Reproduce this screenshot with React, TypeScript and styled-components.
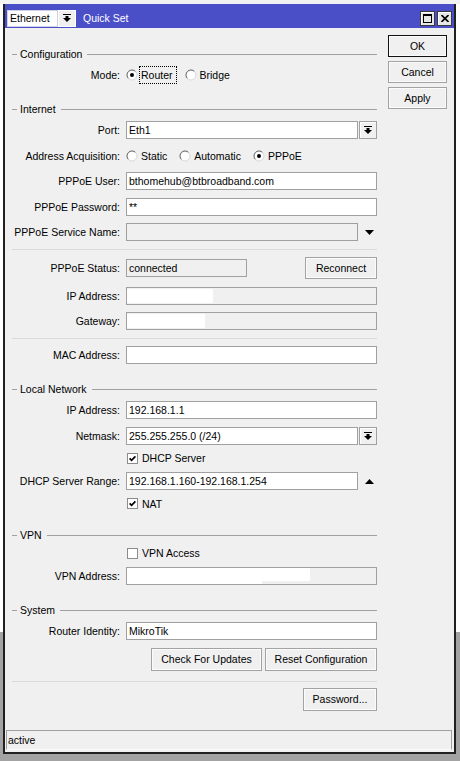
import React from "react";
import styled, { createGlobalStyle, css } from "styled-components";

const GlobalStyle = createGlobalStyle`
  *, *::before, *::after { box-sizing: border-box; }
  html, body { margin: 0; padding: 0; }
  body {
    background: linear-gradient(to bottom, #f2f2f2 0, #f2f2f2 4px, #ffffff 4px, #ffffff 632px, #a3a3a3 632px);
    font-family: "Liberation Sans", Arial, sans-serif;
    font-size: 10.5px;
    color: #000;
  }
`;

const Desktop = styled.div`
  width: 460px;
  height: 761px;
  padding: 4px 0 0 3px;
  overflow: hidden;
`;

const Window = styled.div`
  width: 453px;
  height: 750px;
  display: flex;
  flex-direction: column;
  background: #f0f0f0;
  border: 2px solid #202020;
  border-top: none;
`;

/* ---------- title bar ---------- */

const TitleBar = styled.div`
  height: 24px;
  flex: none;
  display: flex;
  align-items: center;
  padding: 4px 2px 0 2px;
  background: #4a4fc8;
`;

const TitleCombo = styled.div`
  display: flex;
  height: 17px;
`;

const ComboValue = styled.div`
  width: 51px;
  height: 17px;
  background: #fff;
  border: 1px solid #cfcfe8;
  padding-left: 2px;
  line-height: 15px;
`;

const ComboButton = styled.div`
  width: 18px;
  height: 17px;
  display: flex;
  align-items: center;
  justify-content: center;
  background: #f0f0f0;
  border: 1px solid #ffffff;
`;

const Title = styled.span`
  margin-left: 7px;
  color: #fff;
`;

const TitleButtons = styled.div`
  margin-left: auto;
  display: flex;
  gap: 2px;
`;

const TitleButton = styled.div`
  width: 15px;
  height: 15px;
  display: flex;
  align-items: center;
  justify-content: center;
  background: #e6e6e6;
  border: 1px solid #3a3a3a;
  box-shadow: inset 1px 1px 0 #ffffff;
`;

/* ---------- body layout ---------- */

const Body = styled.div`
  flex: 1;
  display: flex;
  gap: 11px;
  padding: 7px 7px 0 7px;
`;

const Main = styled.div`
  width: 365px;
  padding-top: 13px;
  display: flex;
  flex-direction: column;
`;

const Side = styled.div`
  width: 59px;
  display: flex;
  flex-direction: column;
  gap: 4px;
`;

const Section = styled.section`
  display: flex;
  flex-direction: column;
  gap: 6px;
  & + & {
    margin-top: 19px;
  }
`;

const GroupTitle = styled.div`
  height: 12px;
  display: flex;
  align-items: center;
  gap: 3px;
  line-height: 12px;
  white-space: nowrap;
  &::before {
    content: "";
    width: 5px;
    border-top: 1px solid #a0a0a0;
  }
  &::after {
    content: "";
    flex: 1;
    margin-left: 2px;
    border-top: 1px solid #a0a0a0;
  }
`;

const Rows = styled.div`
  display: flex;
  flex-direction: column;
  gap: 7.5px;
`;

const Row = styled.div<{ $h?: number }>`
  height: ${(p) => p.$h ?? 18}px;
  display: grid;
  grid-template-columns: 108px 1fr;
  column-gap: 6px;
  align-items: center;
`;

const Label = styled.span`
  text-align: right;
  white-space: nowrap;
`;

const Divider = styled.div<{ $spaced?: boolean }>`
  height: 1px;
  flex: none;
  background: #dadada;
  ${(p) =>
    p.$spaced &&
    css`
      margin: 10px 0 6px;
    `}
`;

/* ---------- inputs ---------- */

const TextBox = styled.div<{ $disabled?: boolean; $w?: number; $bare?: boolean }>`
  height: 18px;
  min-width: 0;
  display: flex;
  align-items: center;
  overflow: hidden;
  white-space: nowrap;
  border: 1px solid #a0a0a0;
  background: ${(p) => (p.$disabled ? "#f0f0f0" : "#ffffff")};
  padding-left: ${(p) => (p.$bare ? 0 : 2)}px;
  ${(p) =>
    p.$w &&
    css`
      width: ${p.$w}px;
    `}
`;

const Blot = styled.span<{ $w: number; $h?: number; $top?: boolean }>`
  flex: none;
  display: block;
  width: ${(p) => p.$w}px;
  height: ${(p) => p.$h ?? 14}px;
  background: #ffffff;
  ${(p) =>
    p.$top &&
    css`
      align-self: flex-start;
    `}
`;

const Combo = styled.div`
  display: grid;
  grid-template-columns: 232px 18px;
  column-gap: 1px;
  height: 18px;
`;

const DropButton = styled.div`
  height: 18px;
  display: flex;
  align-items: center;
  justify-content: center;
  background: #f0f0f0;
  border: 1px solid #a0a0a0;
  box-shadow: inset 1px 1px 0 #ffffff;
`;

const WithTail = styled.div`
  display: grid;
  grid-template-columns: 232px 1fr;
  height: 18px;
`;

const Tail = styled.div`
  display: flex;
  align-items: center;
  justify-content: center;
  padding-left: 3px;
`;

const Split = styled.div`
  display: flex;
  align-items: center;
  justify-content: space-between;
`;

const ButtonLine = styled.div`
  display: flex;
  justify-content: flex-end;
  gap: 3px;
`;

const PushButton = styled.button<{ $w?: number; $h?: number; $primary?: boolean }>`
  font: inherit;
  color: #000;
  flex: none;
  width: ${(p) => (p.$w ? `${p.$w}px` : "100%")};
  height: ${(p) => p.$h ?? 23}px;
  padding: 0;
  background: #f0f0f0;
  border: 1px solid ${(p) => (p.$primary ? "#111111" : "#a3a3a3")};
  box-shadow: inset 0 0 0 1px #fbfbfb;
`;

/* ---------- radios and checkboxes ---------- */

const Choices = styled.div`
  display: flex;
  align-items: center;
  gap: 8px;
`;

const Option = styled.label`
  display: flex;
  align-items: center;
  gap: 1px;
  white-space: nowrap;
`;

const OptionText = styled.span<{ $focused?: boolean }>`
  line-height: 14px;
  padding: 1px 3px 1px 1px;
  border: 1px dotted ${(p) => (p.$focused ? "#000" : "transparent")};
`;

const CheckItem = styled.label`
  display: flex;
  align-items: center;
  gap: 4px;
  padding-left: 1px;
  white-space: nowrap;
`;

const CheckBox = styled.span`
  width: 11px;
  height: 11px;
  flex: none;
  display: flex;
  align-items: center;
  justify-content: center;
  background: #fff;
  border: 1px solid #8c8c8c;
`;

const StatusBar = styled.div`
  flex: none;
  height: 20px;
  margin: 0 2px 2px 1px;
  display: flex;
  align-items: center;
  padding-left: 1px;
  border: 1px solid #a0a0a0;
  border-bottom-color: #fafafa;
`;

/* ---------- glyphs ---------- */

function DropGlyph() {
  return (
    <svg width="8" height="8" viewBox="0 0 8 8" aria-hidden="true">
      <rect x="0" y="0" width="8" height="1" fill="#000" />
      <rect x="2.5" y="2" width="3" height="2" fill="#000" />
      <path d="M0 4 H8 L4 8 Z" fill="#000" />
    </svg>
  );
}

function Triangle({ up }: { up?: boolean }) {
  return (
    <svg width="9" height="5" viewBox="0 0 9 5" aria-hidden="true">
      <path d={up ? "M0 5 H9 L4.5 0 Z" : "M0 0 H9 L4.5 5 Z"} fill="#000" />
    </svg>
  );
}

function RadioMark({ checked }: { checked?: boolean }) {
  return (
    <svg width="12" height="12" viewBox="0 0 12 12" aria-hidden="true">
      <circle cx="6" cy="6" r="5" fill="#fff" />
      <path d="M2.46 9.54 A5 5 0 0 1 9.54 2.46" fill="none" stroke="#5c5c5c" strokeWidth="1" />
      <path d="M9.54 2.46 A5 5 0 0 1 2.46 9.54" fill="none" stroke="#d8d8d8" strokeWidth="1" />
      {checked && <circle cx="6" cy="6" r="2" fill="#000" />}
    </svg>
  );
}

function Radio({ checked, focused, children }: { checked?: boolean; focused?: boolean; children: React.ReactNode }) {
  return (
    <Option>
      <RadioMark checked={checked} />
      <OptionText $focused={focused}>{children}</OptionText>
    </Option>
  );
}

function Check({ checked, children }: { checked?: boolean; children: React.ReactNode }) {
  return (
    <CheckItem>
      <CheckBox>
        {checked && (
          <svg width="7" height="7" viewBox="0 0 7 7" aria-hidden="true">
            <path d="M0.6 3.4 L2.6 5.4 L6.4 1.4" fill="none" stroke="#000" strokeWidth="1.7" />
          </svg>
        )}
      </CheckBox>
      {children}
    </CheckItem>
  );
}

function MaximizeGlyph() {
  return (
    <svg width="9" height="9" viewBox="0 0 9 9" aria-hidden="true">
      <rect x="0.5" y="0.5" width="8" height="8" fill="none" stroke="#000" />
      <rect x="0" y="0" width="9" height="2" fill="#000" />
    </svg>
  );
}

function CloseGlyph() {
  return (
    <svg width="8" height="7" viewBox="0 0 8 7" aria-hidden="true">
      <path d="M0.5 0 L7.5 7 M7.5 0 L0.5 7" stroke="#000" strokeWidth="1.6" />
    </svg>
  );
}

/* ---------- page ---------- */

export default function App() {
  return (
    <>
      <GlobalStyle />
      <Desktop>
        <Window>
          <TitleBar>
            <TitleCombo>
              <ComboValue>Ethernet</ComboValue>
              <ComboButton>
                <DropGlyph />
              </ComboButton>
            </TitleCombo>
            <Title>Quick Set</Title>
            <TitleButtons>
              <TitleButton>
                <MaximizeGlyph />
              </TitleButton>
              <TitleButton>
                <CloseGlyph />
              </TitleButton>
            </TitleButtons>
          </TitleBar>

          <Body>
            <Main>
              <Section>
                <GroupTitle>Configuration</GroupTitle>
                <Rows>
                  <Row>
                    <Label>Mode:</Label>
                    <Choices>
                      <Radio checked focused>
                        Router
                      </Radio>
                      <Radio>Bridge</Radio>
                    </Choices>
                  </Row>
                </Rows>
              </Section>

              <Section>
                <GroupTitle>Internet</GroupTitle>
                <Rows>
                  <Row>
                    <Label>Port:</Label>
                    <Combo>
                      <TextBox>Eth1</TextBox>
                      <DropButton>
                        <DropGlyph />
                      </DropButton>
                    </Combo>
                  </Row>
                  <Row>
                    <Label>Address Acquisition:</Label>
                    <Choices>
                      <Radio>Static</Radio>
                      <Radio>Automatic</Radio>
                      <Radio checked>PPPoE</Radio>
                    </Choices>
                  </Row>
                  <Row>
                    <Label>PPPoE User:</Label>
                    <TextBox>bthomehub@btbroadband.com</TextBox>
                  </Row>
                  <Row>
                    <Label>PPPoE Password:</Label>
                    <TextBox>**</TextBox>
                  </Row>
                  <Row>
                    <Label>PPPoE Service Name:</Label>
                    <WithTail>
                      <TextBox $disabled />
                      <Tail>
                        <Triangle />
                      </Tail>
                    </WithTail>
                  </Row>
                  <Divider />
                  <Row $h={22}>
                    <Label>PPPoE Status:</Label>
                    <Split>
                      <TextBox $disabled $w={121}>
                        connected
                      </TextBox>
                      <PushButton $w={72} $h={22}>
                        Reconnect
                      </PushButton>
                    </Split>
                  </Row>
                  <Row>
                    <Label>IP Address:</Label>
                    <TextBox $disabled $bare>
                      <Blot $w={86} />
                    </TextBox>
                  </Row>
                  <Row>
                    <Label>Gateway:</Label>
                    <TextBox $disabled $bare>
                      <Blot $w={78} />
                    </TextBox>
                  </Row>
                  <Divider />
                  <Row>
                    <Label>MAC Address:</Label>
                    <TextBox />
                  </Row>
                </Rows>
              </Section>

              <Section>
                <GroupTitle>Local Network</GroupTitle>
                <Rows>
                  <Row>
                    <Label>IP Address:</Label>
                    <TextBox>192.168.1.1</TextBox>
                  </Row>
                  <Row>
                    <Label>Netmask:</Label>
                    <Combo>
                      <TextBox>255.255.255.0 (/24)</TextBox>
                      <DropButton>
                        <DropGlyph />
                      </DropButton>
                    </Combo>
                  </Row>
                  <Row $h={12.5}>
                    <span />
                    <Check checked>DHCP Server</Check>
                  </Row>
                  <Row>
                    <Label>DHCP Server Range:</Label>
                    <WithTail>
                      <TextBox>192.168.1.160-192.168.1.254</TextBox>
                      <Tail>
                        <Triangle up />
                      </Tail>
                    </WithTail>
                  </Row>
                  <Row $h={12.5}>
                    <span />
                    <Check checked>NAT</Check>
                  </Row>
                </Rows>
              </Section>

              <Section>
                <GroupTitle>VPN</GroupTitle>
                <Rows>
                  <Row $h={12.5}>
                    <span />
                    <Check>VPN Access</Check>
                  </Row>
                  <Row>
                    <Label>VPN Address:</Label>
                    <TextBox $disabled $bare>
                      <Blot $w={135} $h={16} />
                      <Blot $w={48} $h={13} $top />
                    </TextBox>
                  </Row>
                </Rows>
              </Section>

              <Section>
                <GroupTitle>System</GroupTitle>
                <Rows>
                  <Row>
                    <Label>Router Identity:</Label>
                    <TextBox>MikroTik</TextBox>
                  </Row>
                  <ButtonLine>
                    <PushButton $w={111}>Check For Updates</PushButton>
                    <PushButton $w={112}>Reset Configuration</PushButton>
                  </ButtonLine>
                </Rows>
              </Section>

              <Divider $spaced />
              <ButtonLine>
                <PushButton $w={74}>Password...</PushButton>
              </ButtonLine>
            </Main>

            <Side>
              <PushButton $primary $h={22}>
                OK
              </PushButton>
              <PushButton $h={22}>Cancel</PushButton>
              <PushButton $h={22}>Apply</PushButton>
            </Side>
          </Body>

          <StatusBar>active</StatusBar>
        </Window>
      </Desktop>
    </>
  );
}
